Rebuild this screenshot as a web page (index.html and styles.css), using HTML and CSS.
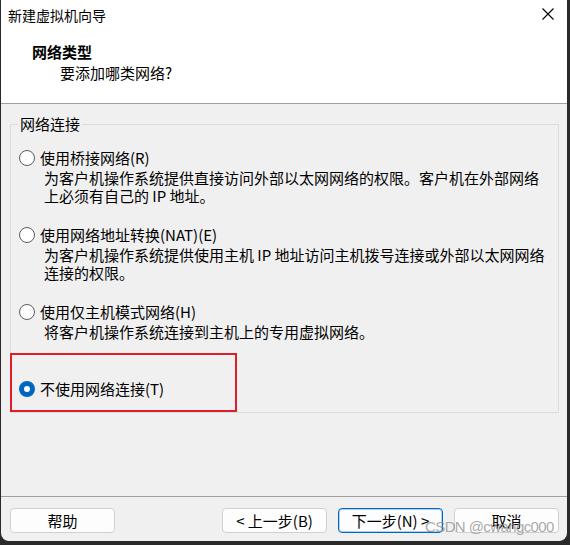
FILE: index.html
```html
<!DOCTYPE html>
<html lang="zh-CN">
<head>
<meta charset="utf-8">
<title>新建虚拟机向导</title>
<link rel="stylesheet" href="styles.css">
</head>
<body>
<div class="window">
  <div class="top">
    <div class="titlebar">
      <span class="title">新建虚拟机向导</span>
      <svg class="close" width="12" height="12" viewBox="0 0 12 12"><path d="M0.5 0.5 L11.5 11.5 M11.5 0.5 L0.5 11.5" stroke="#000" stroke-width="1.1" fill="none"/></svg>
    </div>
    <div class="header">
      <div class="h-title">网络类型</div>
      <div class="h-sub">要添加哪类网络?</div>
    </div>
  </div>
  <div class="content">
    <fieldset class="group">
      <legend class="legend">网络连接</legend>
      <div class="options">
        <div class="option">
          <div class="opt-label"><span class="radio"></span>使用桥接网络(R)</div>
          <div class="opt-desc">为客户机操作系统提供直接访问外部以太网网络的权限。客户机在外部网络<br>上必须有自己的 IP 地址。</div>
        </div>
        <div class="option">
          <div class="opt-label"><span class="radio"></span>使用网络地址转换(NAT)(E)</div>
          <div class="opt-desc">为客户机操作系统提供使用主机 IP 地址访问主机拨号连接或外部以太网网络<br>连接的权限。</div>
        </div>
        <div class="option">
          <div class="opt-label"><span class="radio"></span>使用仅主机模式网络(H)</div>
          <div class="opt-desc">将客户机操作系统连接到主机上的专用虚拟网络。</div>
        </div>
        <div class="option option-last">
          <div class="opt-label"><span class="radio radio-on"></span>不使用网络连接(T)</div>
        </div>
      </div>
    </fieldset>
  </div>
  <div class="footer">
    <button class="btn">帮助</button>
    <div class="btn-group">
      <button class="btn">&lt; 上一步(B)</button>
      <button class="btn btn-default">下一步(N) &gt;</button>
      <button class="btn">取消</button>
    </div>
  </div>
  <div class="highlight"></div>
  <div class="watermark">CSDN @cwangc000</div>
</div>
</body>
</html>
```
FILE: styles.css
```css
* { box-sizing: border-box; }
html, body {
  margin: 0;
  padding: 0;
}
body {
  background: #2a2a2a;
  width: 570px;
  height: 545px;
  overflow: hidden;
  font-family: "Noto Sans CJK SC", "Noto Sans", sans-serif;
  color: #000;
}
.window {
  position: relative;
  margin-left: 1px;
  width: 566px;
  height: 541px;
  background: #f0f0f0;
  border-radius: 0 0 8px 8px;
  overflow: hidden;
  display: flex;
  flex-direction: column;
}
.top {
  background: #fff;
  border-bottom: 1px solid #a0a0a0;
}
.titlebar {
  height: 29px;
  display: flex;
  align-items: center;
  justify-content: space-between;
  padding: 0 13px 0 7px;
}
.title {
  font-size: 14px;
  line-height: 20px;
}
.close {
  display: block;
  margin-top: -1px;
}
.header {
  padding: 13px 0 20px 31px;
}
.h-title {
  font-size: 15px;
  font-weight: bold;
  line-height: 20px;
}
.h-sub {
  font-size: 15px;
  line-height: 20px;
  margin-top: 1px;
  padding-left: 28px;
}
.content {
  padding: 10px 8px 0 9px;
}
.group {
  margin: 0;
  padding: 0;
  border: 1px solid #dcdcdc;
  height: 299px;
  min-inline-size: 0;
}
.legend {
  font-size: 15px;
  line-height: 20px;
  padding: 0 2px;
  margin-left: 7px;
}
.options {
  padding: 14px 0 0 8px;
  display: flex;
  flex-direction: column;
  gap: 20px;
}
.option-last {
  margin-top: 18px;
}
.opt-label {
  font-size: 15px;
  line-height: 20px;
  display: flex;
  align-items: center;
  white-space: nowrap;
}
.radio {
  width: 16px;
  height: 16px;
  border: 1px solid #5c5c5c;
  border-radius: 50%;
  background: #fff;
  margin-right: 5px;
  flex: none;
}
.radio-on {
  border: 5px solid #0067c0;
  background: #fff;
}
.opt-desc {
  font-size: 15px;
  line-height: 18px;
  margin-top: 1px;
  padding-left: 25px;
  white-space: nowrap;
}
.footer {
  margin-top: auto;
  border-top: 1px solid #a0a0a0;
  padding: 11px 8px 8px 9px;
  display: flex;
  justify-content: space-between;
}
.btn-group {
  display: flex;
  gap: 11px;
}
.btn {
  width: 105px;
  height: 25px;
  padding: 0;
  border: 1px solid #d0d0d0;
  border-radius: 4px;
  background: #fdfdfd;
  font-family: "Noto Sans CJK SC", "Noto Sans", sans-serif;
  font-size: 15px;
  line-height: 21px;
  color: #000;
}
.btn-default {
  border-color: #0067c0;
  box-shadow: inset 0 0 0 1px rgba(0, 103, 192, 0.3);
}
.highlight {
  position: absolute;
  left: 9px;
  top: 353px;
  width: 227px;
  height: 59px;
  border: 2px solid #e01e2a;
}
.watermark {
  position: absolute;
  left: 424px;
  top: 517px;
  font-family: "Liberation Sans", Arial, sans-serif;
  font-size: 15px;
  letter-spacing: -0.6px;
  line-height: 20px;
  color: rgba(140, 140, 140, 0.75);
  white-space: nowrap;
}
```
